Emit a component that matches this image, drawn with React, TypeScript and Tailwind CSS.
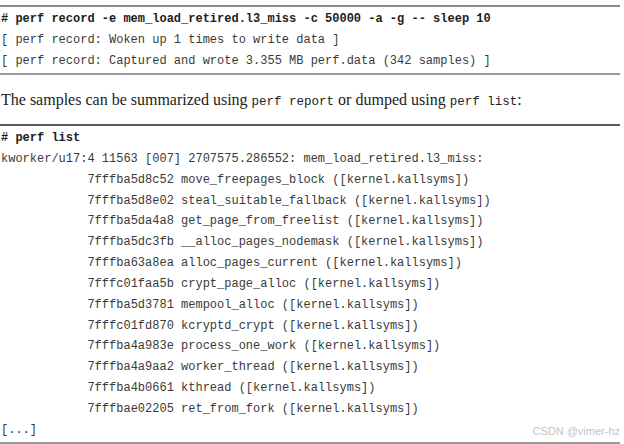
const mono = "font-['Liberation_Mono',monospace]";

const frames = [
  ["7fffba5d8c52", "move_freepages_block"],
  ["7fffba5d8e02", "steal_suitable_fallback"],
  ["7fffba5da4a8", "get_page_from_freelist"],
  ["7fffba5dc3fb", "__alloc_pages_nodemask"],
  ["7fffba63a8ea", "alloc_pages_current"],
  ["7fffc01faa5b", "crypt_page_alloc"],
  ["7fffba5d3781", "mempool_alloc"],
  ["7fffc01fd870", "kcryptd_crypt"],
  ["7fffba4a983e", "process_one_work"],
  ["7fffba4a9aa2", "worker_thread"],
  ["7fffba4b0661", "kthread"],
  ["7fffbae02205", "ret_from_fork"],
];

export default function App() {
  return (
    <div className="relative w-[624px] h-[444px] bg-white overflow-hidden">
      <div className="w-[620px] pt-[5px]">
        {/* first listing */}
        <div className={`border-t-2 border-b-2 border-t-[#8a8a8a] border-b-[#9a9a9a] pt-[2px] pb-[1px] pl-[1px] text-[12px] leading-[21px] text-[#3a3a3a] whitespace-pre ${mono}`}>
          <div className="font-bold text-[#1c1c1c]"># perf record -e mem_load_retired.l3_miss -c 50000 -a -g -- sleep 10</div>
          <div>[ perf record: Woken up 1 times to write data ]</div>
          <div>[ perf record: Captured and wrote 3.355 MB perf.data (342 samples) ]</div>
        </div>

        <p className="mt-[15px] pl-[1px] font-['Liberation_Serif',serif] text-[16px] leading-[20px] text-[#222]">
          The samples can be summarized using <span className={`${mono} text-[12.5px]`}>perf report</span> or dumped using <span className={`${mono} text-[12.5px]`}>perf list</span>:
        </p>

        {/* second listing */}
        <div className={`mt-[12px] border-t-2 border-b-2 border-t-[#5c5c5c] border-b-[#9a9a9a] pt-[2px] pb-[1px] pl-[1px] text-[12px] leading-[20.85px] text-[#3a3a3a] whitespace-pre ${mono}`}>
          <div className="font-bold text-[#1c1c1c]"># perf list</div>
          <div>kworker/u17:4 11563 [007] 2707575.286552: mem_load_retired.l3_miss:</div>
          {frames.map(([addr, fn]) => (
            <div key={addr}>{"            "}{addr} {fn} ([kernel.kallsyms])</div>
          ))}
          <div>[...]</div>
        </div>
      </div>

      <span className="absolute right-[4px] top-[423px] font-['Liberation_Sans',sans-serif] text-[11px] text-[#c4c4c4]">CSDN @vimer-hz</span>
    </div>
  );
}
